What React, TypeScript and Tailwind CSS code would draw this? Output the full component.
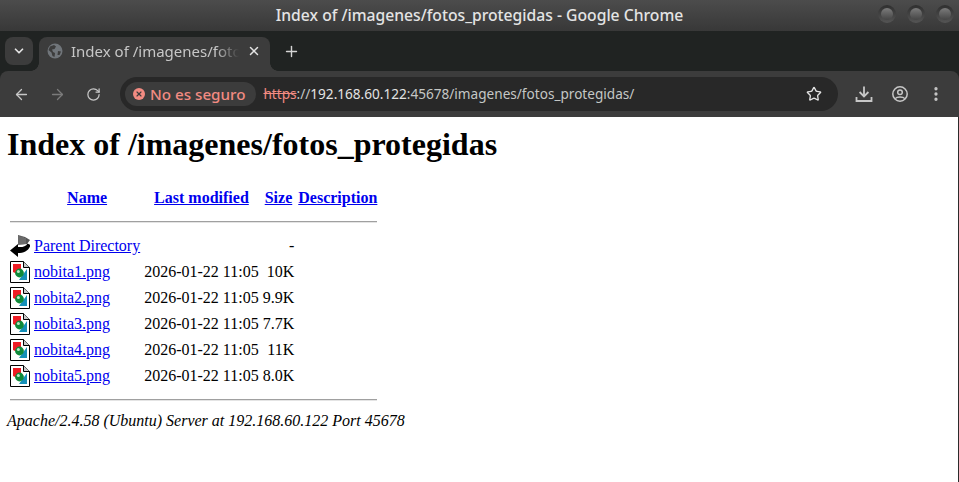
import React from "react";
import {
  ArrowLeft,
  ArrowRight,
  ChevronDown,
  EllipsisVertical,
  Plus,
  RotateCw,
  Star,
  X,
} from "lucide-react";

const files = [
  { name: "nobita1.png", size: "10K" },
  { name: "nobita2.png", size: "9.9K" },
  { name: "nobita3.png", size: "7.7K" },
  { name: "nobita4.png", size: "11K" },
  { name: "nobita5.png", size: "8.0K" },
];

const WindowDot = () => (
  <div className="w-[18px] h-[18px] rounded-full bg-gradient-to-b from-[#2f2f2f] to-[#555555] flex items-center justify-center">
    <div className="w-[12px] h-[12px] rounded-full bg-gradient-to-b from-[#7c7c7c] to-[#454545]" />
  </div>
);

const GlobeIcon = () => (
  <svg width="16" height="16" viewBox="0 0 16 16" className="shrink-0">
    <circle cx="8" cy="8" r="7.5" fill="#70757a" />
    <path d="M3 3.5 L7 2 L9 3.5 L7.5 6 L5 6.5 L6 9 L8 10 L7.5 14 L5.5 13 L4.5 9.5 L1.5 7 Z" fill="#3c3c3c" />
    <path d="M11 8 L14 8.5 L12.5 12 L10.5 12 Z" fill="#3c3c3c" />
  </svg>
);

const DownloadIcon = () => (
  <svg width="18" height="18" viewBox="0 0 18 18" fill="none" stroke="#c7c7c7" strokeWidth="1.8">
    <path d="M9 1.5 V11" />
    <path d="M4.6 7 L9 11.4 L13.4 7" />
    <path d="M1.5 12 V16 H16.5 V12" />
  </svg>
);

const ProfileIcon = () => (
  <svg width="18" height="18" viewBox="0 0 18 18" fill="none" stroke="#c7c7c7" strokeWidth="1.5">
    <circle cx="9" cy="9" r="7.2" />
    <circle cx="9" cy="7.2" r="2.3" />
    <path d="M4.2 13.6 C6 11.4 12 11.4 13.8 13.6" />
  </svg>
);

const BackIcon = () => (
  <svg width="20" height="22" viewBox="0 0 20 22" className="shrink-0">
    <path d="M8 0 L15 2 L20 5 L17 9 L8 10 Z" fill="#555555" />
    <path d="M9 1 V10 M11 1.5 V10 M13 2 V9.5 M15 3 V9" stroke="#a0a0a0" strokeWidth="0.6" />
    <path d="M0 15.5 L8 9 L8 12 C12 12.5 16 11.5 17.5 8.5 L20.5 10 C19 15.5 14 18 8 18 L8 22 Z" fill="#000000" />
  </svg>
);

const ImageIcon = () => (
  <svg width="20" height="22" viewBox="0 0 20 22" className="shrink-0">
    <path d="M0.5 0.5 H13.5 L19.5 6.5 V21.5 H0.5 Z" fill="#ffffff" stroke="#000000" />
    <path d="M13.5 0.5 V6.5 H19.5" fill="#c8c8c8" stroke="#000000" />
    <path d="M3 3 H11 V8 L7 13 L3 11 Z" fill="#ee1c24" />
    <path d="M17 8 V19 H9 Z" fill="#1590b8" />
    <circle cx="9.5" cy="12" r="4.4" fill="#0f8a3a" />
    <circle cx="8.4" cy="10.6" r="1.5" fill="#b9e6c4" />
  </svg>
);

const Hr = () => <div className="h-[2px] bg-[#a0a0a0] mx-[1px] border-b border-[#e4e4e4]" />;

export default function App() {
  return (
    <div className="w-[959px] h-[482px] overflow-hidden bg-white flex flex-col">
      {/* Window title bar */}
      <div className="relative h-[31px] shrink-0 bg-gradient-to-b from-[#4c4c4c] to-[#383838] flex items-center justify-center font-['Noto_Sans',sans-serif] text-[15.7px] font-medium text-[#e4e4e4]">
        Index of /imagenes/fotos_protegidas - Google Chrome
        <div className="absolute right-[5px] top-[5px] flex gap-[11px]">
          <WindowDot />
          <WindowDot />
          <WindowDot />
        </div>
      </div>

      <div className="flex-none bg-[#202322]">
        {/* Tab strip */}
        <div className="h-[40px] flex items-end pl-[5px] font-['Noto_Sans',sans-serif]">
          <div className="w-[28px] h-[28px] mb-[6px] rounded-lg bg-[#3c3c3c] flex items-center justify-center text-[#e3e3e3]">
            <ChevronDown size={14} strokeWidth={3} />
          </div>
          <div className="relative ml-[6px] w-[231px] h-[34px] rounded-t-lg bg-[#3c3c3c] flex items-center pl-[8px] pr-[9px] pb-[6px] text-[#c7c7c7]">
            <span className="absolute bottom-0 -left-[8px] w-[8px] h-[8px] bg-[radial-gradient(circle_at_0_0,transparent_7.5px,#3c3c3c_8px)]" />
            <span className="absolute bottom-0 -right-[8px] w-[8px] h-[8px] bg-[radial-gradient(circle_at_100%_0,transparent_7.5px,#3c3c3c_8px)]" />
            <GlobeIcon />
            <span className="ml-[8px] w-[168px] overflow-hidden whitespace-nowrap text-[15px] [mask-image:linear-gradient(to_right,black_86%,transparent)]">
              Index of /imagenes/fotos_protegidas
            </span>
            <X size={14} strokeWidth={2.5} className="ml-auto text-[#e3e3e3]" />
          </div>
          <Plus size={17} strokeWidth={2} className="ml-[13px] mb-[11px] text-[#d5d5d5]" />
        </div>

        {/* Toolbar */}
        <div className="h-[46px] bg-[#3c3c3c] rounded-t-lg flex items-center pl-[13px] pr-[14px] font-['Noto_Sans',sans-serif]">
          <ArrowLeft size={17} strokeWidth={1.8} className="text-[#c7c7c7]" />
          <ArrowRight size={17} strokeWidth={1.8} className="ml-[19px] text-[#7b7b7b]" />
          <RotateCw size={15} strokeWidth={2} className="ml-[20px] text-[#c7c7c7]" />
          <div className="ml-[19px] w-[719px] h-[34px] rounded-full bg-[#282828] flex items-center pl-[5px] pr-[16px]">
            <div className="h-[24px] rounded-full bg-[#3c3c3c] flex items-center pl-[8px] pr-[11px] gap-[5px] text-[#f28b82] text-[15.2px] font-medium">
              <span className="w-[12px] h-[12px] rounded-full bg-[#f28b82] flex items-center justify-center">
                <X size={8} strokeWidth={3.5} className="text-[#3c3c3c]" />
              </span>
              No es seguro
            </div>
            <span className="ml-[7px] text-[13.6px] whitespace-nowrap">
              <span className="text-[#f28b82] line-through">https</span>
              <span className="text-[#c4c7c5]">://</span>
              <span className="text-[#e3e3e3]">192.168.60.122</span>
              <span className="text-[#c4c7c5]">:45678/imagenes/fotos_protegidas/</span>
            </span>
            <Star size={16} strokeWidth={2} className="ml-auto text-[#e3e3e3]" />
          </div>
          <div className="ml-[17px]">
            <DownloadIcon />
          </div>
          <div className="ml-[18px]">
            <ProfileIcon />
          </div>
          <EllipsisVertical size={18} strokeWidth={2.4} className="ml-[18px] text-[#c7c7c7]" />
        </div>
      </div>

      {/* Apache autoindex page */}
      <div className="flex-1 border-r border-[#2b2b2b] px-[7px] font-['Liberation_Serif',serif] text-[16px] text-black">
        <h1 className="mt-[9px] text-[32px] leading-[37px] font-bold">Index of /imagenes/fotos_protegidas</h1>

        <table className="mt-[21px] border-separate border-spacing-[2px]">
          <tbody>
            <tr className="h-[24px]">
              <th className="w-[22px]" />
              <th className="px-[1px] text-center font-bold w-[108px]">
                <a className="text-[#0000ee] underline">Name</a>
              </th>
              <th className="px-[1px] text-center font-bold">
                <a className="text-[#0000ee] underline">Last modified</a>
              </th>
              <th className="px-[1px] text-center font-bold">
                <a className="text-[#0000ee] underline">Size</a>
              </th>
              <th className="px-[1px] text-center font-bold">
                <a className="text-[#0000ee] underline">Description</a>
              </th>
            </tr>
            <tr>
              <th colSpan={5} className="font-normal pt-[9px] pb-[9px]">
                <Hr />
              </th>
            </tr>
            <tr className="h-[24px]">
              <td className="pl-[1px] align-middle"><BackIcon /></td>
              <td className="px-[1px]">
                <a className="text-[#0000ee] underline whitespace-nowrap">Parent Directory</a>
              </td>
              <td />
              <td className="px-[1px] text-right">-</td>
              <td />
            </tr>
            {files.map((file) => (
              <tr key={file.name} className="h-[24px]">
                <td className="pl-[1px] align-middle"><ImageIcon /></td>
                <td className="px-[1px]">
                  <a className="text-[#0000ee] underline">{file.name}</a>
                </td>
                <td className="px-[1px] text-right whitespace-nowrap">2026-01-22 11:05</td>
                <td className="px-[1px] text-right">{file.size}</td>
                <td />
              </tr>
            ))}
            <tr>
              <th colSpan={5} className="font-normal pt-[9px] pb-[6px]">
                <Hr />
              </th>
            </tr>
          </tbody>
        </table>

        <address className="italic">Apache/2.4.58 (Ubuntu) Server at 192.168.60.122 Port 45678</address>
      </div>
    </div>
  );
}
